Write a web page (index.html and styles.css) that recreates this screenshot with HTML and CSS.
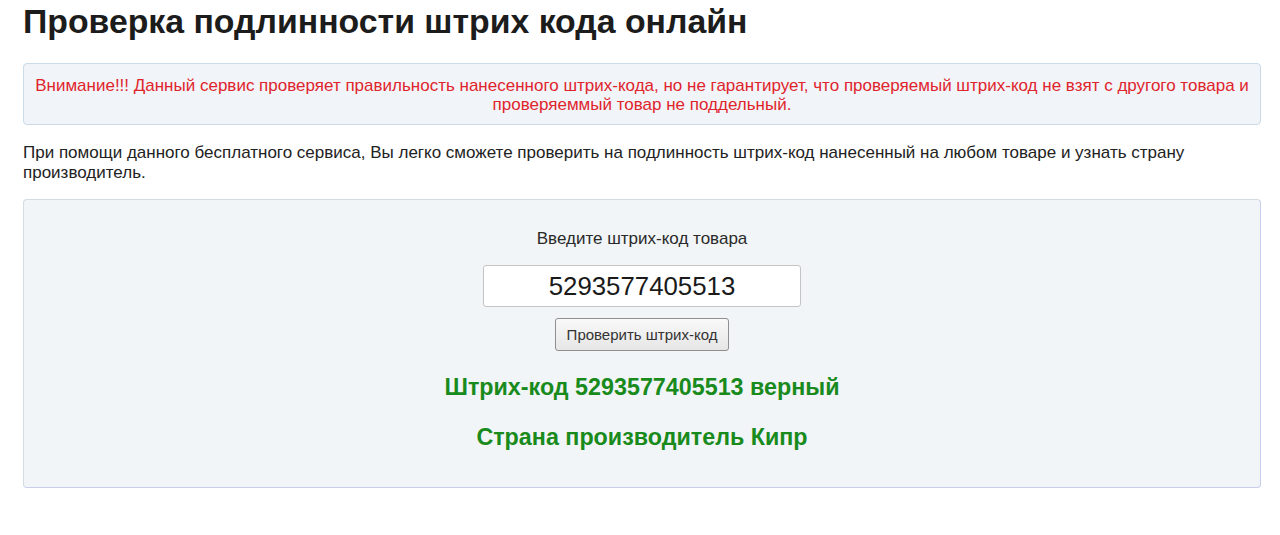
FILE: index.html
```html
<!DOCTYPE html>
<html lang="ru">
<head>
<meta charset="utf-8">
<title>Проверка подлинности штрих кода онлайн</title>
<link rel="stylesheet" href="styles.css">
</head>
<body>
<div class="page">
  <h1 class="title">Проверка подлинности штрих кода онлайн</h1>
  <div class="alert">Внимание!!! Данный сервис проверяет правильность нанесенного штрих-кода, но не гарантирует, что проверяемый штрих-код не взят с другого товара и проверяеммый товар не поддельный.</div>
  <p class="intro">При помощи данного бесплатного сервиса, Вы легко сможете проверить на подлинность штрих-код нанесенный на любом товаре и узнать страну производитель.</p>
  <div class="panel">
    <div class="label">Введите штрих-код товара</div>
    <input class="code" type="text" value="5293577405513">
    <button class="btn" type="button">Проверить штрих-код</button>
    <div class="result">Штрих-код 5293577405513 верный</div>
    <div class="result country">Страна производитель Кипр</div>
  </div>
</div>
</body>
</html>
```
FILE: styles.css
```css
html, body {
  margin: 0;
  padding: 0;
  background: #fff;
}
body {
  font-family: "Liberation Sans", Arial, sans-serif;
  color: #222;
}
.page {
  margin: 0 19px 0 23px;
  padding-top: 4px;
}
.title {
  margin: 0;
  font-size: 33.8px;
  line-height: 34px;
  font-weight: bold;
  color: #1c1c1c;
}
.alert {
  margin-top: 25px;
  height: 62px;
  box-sizing: border-box;
  padding: 12px 10px 10px;
  background: #f1f5f9;
  border: 1px solid #c9dbe8;
  border-radius: 4px;
  color: #e0242c;
  font-size: 17px;
  line-height: 19px;
  text-align: center;
}
.intro {
  margin: 18px 0 0;
  font-size: 17px;
  line-height: 20px;
  color: #222;
}
.panel {
  margin-top: 16px;
  height: 289px;
  box-sizing: border-box;
  background: #f1f5f7;
  border: 1px solid #d3dbe3;
  border-bottom-color: #c8cdee;
  border-right-color: #c8cdee;
  border-radius: 4px;
  display: flex;
  flex-direction: column;
  align-items: center;
  padding-top: 29px;
}
.label {
  font-size: 17px;
  line-height: 20px;
  color: #2a2a2a;
}
.code {
  margin-top: 16px;
  width: 318px;
  height: 42px;
  box-sizing: border-box;
  border: 1px solid #c4c4c4;
  border-radius: 3px;
  background: #fff;
  font-family: "Liberation Sans", Arial, sans-serif;
  font-size: 25.8px;
  color: #1a1a1a;
  text-align: center;
  padding: 0 6px;
}
.btn {
  margin-top: 11px;
  width: 174px;
  height: 33px;
  box-sizing: border-box;
  border: 1px solid #8f8f8f;
  border-radius: 3px;
  background: linear-gradient(#f9f9f9, #e6e6e6);
  font-family: "Liberation Sans", Arial, sans-serif;
  font-size: 15px;
  color: #333;
  padding: 0;
}
.result {
  margin-top: 23px;
  font-size: 23.3px;
  line-height: 26px;
  font-weight: bold;
  color: #198a1c;
}
.country {
  margin-top: 24px;
}
```
